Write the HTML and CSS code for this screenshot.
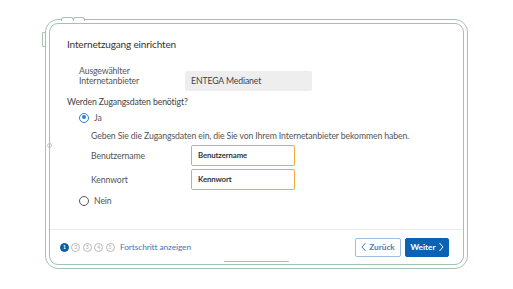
FILE: index.html
```html
<!DOCTYPE html>
<html lang="de">
<head>
  <meta charset="UTF-8">
  <meta name="viewport" content="width=device-width, initial-scale=1">
  <title>Internetzugang einrichten</title>
  <link rel="stylesheet" href="styles.css">
</head>
<body>

  <div class="tablet">
    <span class="btn-top btn-top-a"></span>
    <span class="btn-top btn-top-b"></span>
    <span class="btn-side"></span>
    <span class="camera"></span>

    <div class="screen">
      <div class="content">
        <h1>Internetzugang einrichten</h1>

        <div class="row provider">
          <div class="label">Ausgewählter<br>Internetanbieter</div>
          <div class="readonly">ENTEGA Medianet</div>
        </div>

        <p class="question">Werden Zugangsdaten benötigt?</p>

        <label class="radio"><span class="dot checked"></span>Ja</label>

        <div class="creds">
          <p class="hint">Geben Sie die Zugangsdaten ein, die Sie von Ihrem Internetanbieter bekommen haben.</p>
          <div class="row field">
            <div class="label">Benutzername</div>
            <div class="input">Benutzername</div>
          </div>
          <div class="row field">
            <div class="label">Kennwort</div>
            <div class="input">Kennwort</div>
          </div>
        </div>

        <label class="radio"><span class="dot"></span>Nein</label>
      </div>

      <div class="footer">
        <div class="steps">
          <span class="step active">1</span>
          <span class="step">2</span>
          <span class="step">3</span>
          <span class="step">4</span>
          <span class="step">5</span>
          <a class="progress" href="#">Fortschritt anzeigen</a>
        </div>
        <div class="actions">
          <button class="back">
            <svg width="5" height="10" viewBox="0 0 5 10"><path d="M4.5 1 1 5l3.5 4" fill="none" stroke="currentColor" stroke-width="1"/></svg>
            Zurück
          </button>
          <button class="next">
            Weiter
            <svg width="5" height="10" viewBox="0 0 5 10"><path d="M.5 1 4 5 .5 9" fill="none" stroke="currentColor" stroke-width="1"/></svg>
          </button>
        </div>
      </div>

      <span class="home"></span>
    </div>
  </div>

</body>
</html>
```

FILE: styles.css
```css
body { margin: 0; background: #fff; font-family: "Lato", "Noto Sans", sans-serif; color: #444; }

.tablet { position: relative; width: 415px; height: 242px; margin: 19px 0 0 45px; border: 1.5px solid #a3c2b2; border-radius: 13px; padding: 3px; box-sizing: content-box; }
.btn-top { position: absolute; top: -3px; height: 3px; background: #fff; border: 1.2px solid #a3c2b2; border-bottom: none; border-radius: 3px 3px 0 0; }
.btn-top-a { left: 15px; width: 11px; }
.btn-top-b { left: 27px; width: 10px; }
.btn-side { position: absolute; left: -4px; top: 12px; width: 2px; height: 13px; border: 1.2px solid #a3c2b2; border-right: none; border-radius: 2px 0 0 2px; }
.camera { position: absolute; left: 1px; top: 123px; width: 3px; height: 3px; border: 1px solid #b5cfc2; border-radius: 50%; }

.screen { position: relative; height: 100%; border: 1.5px solid #a3c2b2; border-radius: 9px; display: flex; flex-direction: column; box-sizing: border-box; }
.content { flex: 1; padding: 14px 0 0 17px; font-size: 8.7px; letter-spacing: -0.12px; }

h1 { margin: 0 0 16px; font-size: 10px; font-weight: 400; color: #333; letter-spacing: -0.15px; }

.row { display: flex; align-items: center; }
.label { color: #555; line-height: 10px; }
.provider { padding-left: 12px; align-items: flex-start; }
.provider .label { width: 106px; }
.readonly { margin-top: 5px; width: 121px; height: 20px; line-height: 20px; padding-left: 6px; background: #eeeeef; border-radius: 2px; color: #444; }

.question { margin: 5px 0 5px; color: #444; }

.radio { display: flex; align-items: center; gap: 5px; margin-left: 12px; color: #555; }
.dot { width: 10px; height: 10px; border: 1.3px solid #555; border-radius: 50%; box-sizing: border-box; position: relative; }
.dot.checked { border-color: #2f7fd0; }
.dot.checked::after { content: ""; position: absolute; left: 1.7px; top: 1.7px; width: 4px; height: 4px; border-radius: 50%; background: #2f7fd0; }

.creds { padding-left: 24px; margin: 7px 0 5px; }
.hint { margin: 0 0 4px; color: #555; }
.field { margin-bottom: 3px; }
.field .label { width: 100px; }
.input { width: 96px; height: 19px; line-height: 19px; padding-left: 6px; border: 1.3px solid #f0a93a; border-radius: 2px; font-weight: 700; font-size: 7.8px; color: #333; }

.footer { height: 34px; border-top: 1px solid #ebebeb; display: flex; align-items: center; justify-content: space-between; padding: 0 14px 0 10px; }
.steps { display: flex; align-items: center; gap: 2.4px; }
.step { width: 7px; height: 7px; border: 0.8px solid #b9b9b9; border-radius: 50%; font-size: 5px; line-height: 7px; text-align: center; color: #aaa; box-sizing: content-box; }
.step.active { background: #0d5ea8; border-color: #0d5ea8; color: #fff; font-weight: 700; }
.progress { margin-left: 3px; font-size: 8.4px; letter-spacing: -0.1px; color: #3b79b8; text-decoration: none; }

.actions { display: flex; gap: 4px; }
button { font-family: inherit; font-size: 8.2px; font-weight: 700; height: 19px; border-radius: 2px; display: flex; align-items: center; justify-content: center; gap: 3px; padding: 0; cursor: pointer; }
button svg { flex-shrink: 0; }
.back { width: 46px; background: #fff; border: 1px solid #9fbede; color: #3f7fbd; }
.next { width: 44px; background: #0b62b2; border: 1px solid #0b62b2; color: #fff; }

.home { position: absolute; left: 174px; bottom: 2px; width: 65px; height: 1.5px; background: #a3c2b2; border-radius: 1px; }
```
